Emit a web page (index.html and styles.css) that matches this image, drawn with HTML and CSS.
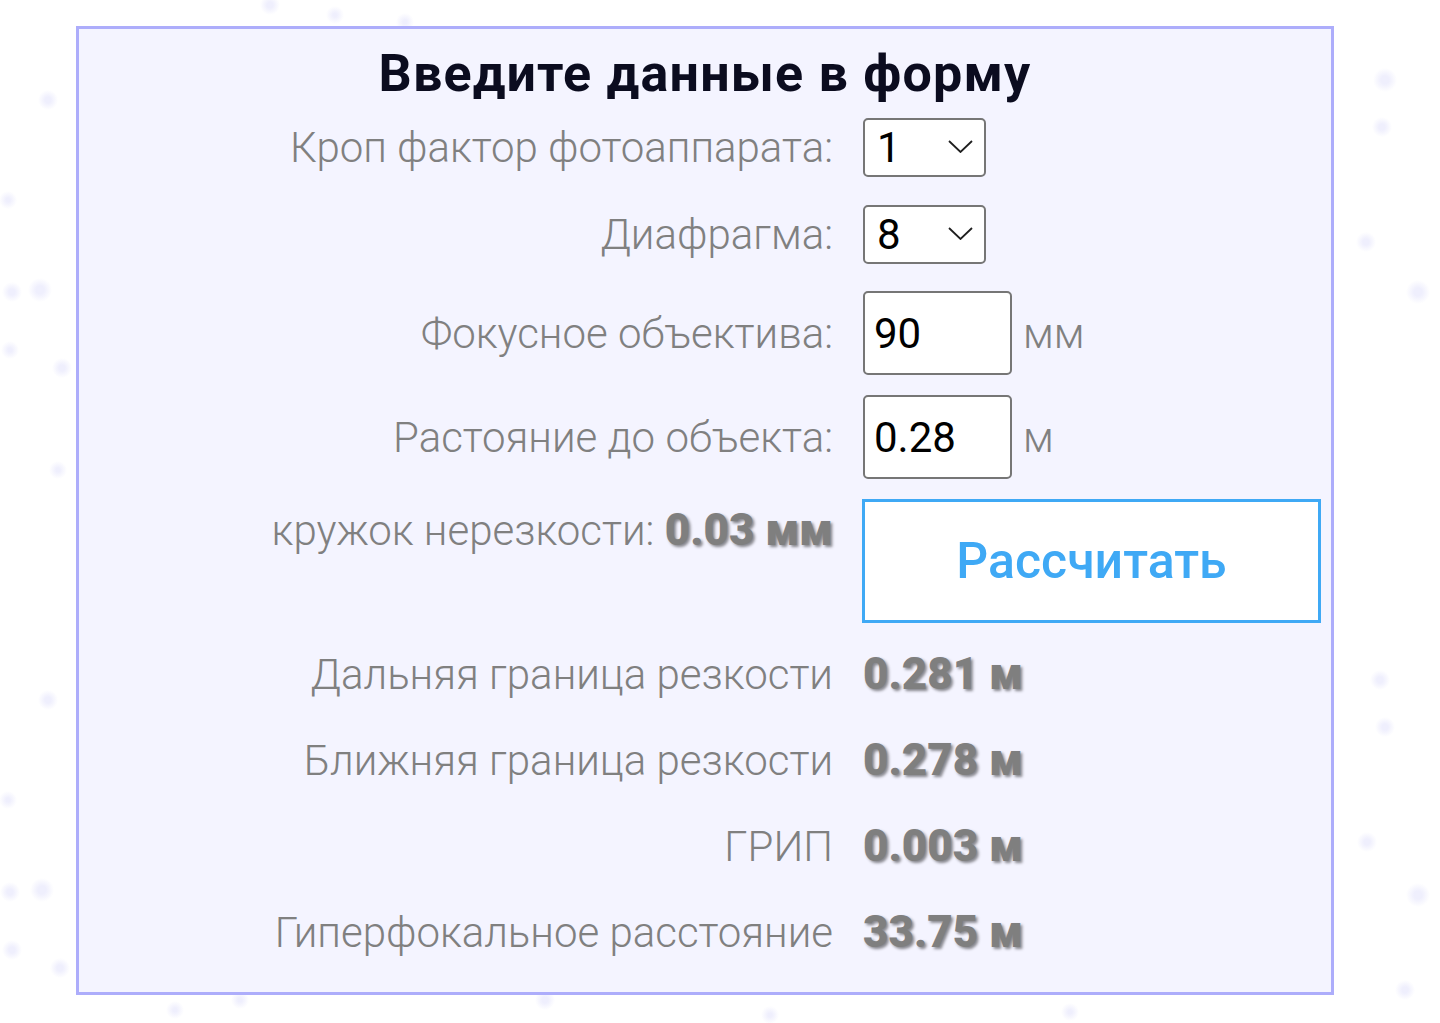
FILE: index.html
```html
<!DOCTYPE html>
<html lang="ru">
<head>
  <meta charset="UTF-8" />
  <meta name="viewport" content="width=device-width, initial-scale=1.0"/>
  <title>Калькулятор ГРИП</title>
  <link rel="stylesheet" href="styles.css">
</head>
<body>

<form class="calc" onsubmit="return false">
  <h1 class="calc-title">Введите данные в форму</h1>

  <div class="row row-first">
    <label class="label" for="crop">Кроп фактор фотоаппарата:</label>
    <div class="select-wrap">
      <select id="crop" class="field field-select">
        <option selected>1</option>
        <option>1.3</option>
        <option>1.5</option>
        <option>1.6</option>
        <option>2</option>
      </select>
      <svg class="chevron" width="25" height="13" viewBox="0 0 25 13"><path d="M1 1 L12.5 12 L24 1" fill="none" stroke="#1f1f1f" stroke-width="1.8"/></svg>
    </div>
  </div>

  <div class="row row-aperture">
    <label class="label" for="aperture">Диафрагма:</label>
    <div class="select-wrap">
      <select id="aperture" class="field field-select">
        <option>1.4</option>
        <option>2</option>
        <option>2.8</option>
        <option>4</option>
        <option>5.6</option>
        <option selected>8</option>
        <option>11</option>
        <option>16</option>
        <option>22</option>
      </select>
      <svg class="chevron" width="25" height="13" viewBox="0 0 25 13"><path d="M1 1 L12.5 12 L24 1" fill="none" stroke="#1f1f1f" stroke-width="1.8"/></svg>
    </div>
  </div>

  <div class="row row-focal">
    <label class="label" for="focal">Фокусное объектива:</label>
    <input id="focal" class="field field-input" type="text" value="90">
    <span class="unit">мм</span>
  </div>

  <div class="row row-distance">
    <label class="label" for="distance">Растояние до объекта:</label>
    <input id="distance" class="field field-input" type="text" value="0.28">
    <span class="unit">м</span>
  </div>

  <div class="row row-action">
    <div class="label label-coc">кружок нерезкости: <b class="value">0.03 мм</b></div>
    <button class="calc-btn" type="submit">Рассчитать</button>
  </div>

  <div class="row result result-first">
    <div class="label">Дальняя граница резкости</div>
    <div class="value">0.281 м</div>
  </div>
  <div class="row result">
    <div class="label">Ближняя граница резкости</div>
    <div class="value">0.278 м</div>
  </div>
  <div class="row result">
    <div class="label">ГРИП</div>
    <div class="value">0.003 м</div>
  </div>
  <div class="row result">
    <div class="label">Гиперфокальное расстояние</div>
    <div class="value">33.75 м</div>
  </div>
</form>

</body>
</html>
```

FILE: styles.css
```css
html, body {
  margin: 0;
  padding: 0;
}

body {
  min-height: 100vh;
  font-family: Roboto, "Noto Sans", sans-serif;
  background-color: #ffffff;
  /* faint blurred notes scattered round the form */
  background-image:
    radial-gradient(circle at 48px 100px, #efeffd 0, #efeffd 3px, rgba(239,239,253,0) 10px),
    radial-gradient(circle at 8px 200px, #efeffd 0, #efeffd 2px, rgba(239,239,253,0) 9px),
    radial-gradient(circle at 12px 292px, #efeffd 0, #efeffd 3px, rgba(239,239,253,0) 10px),
    radial-gradient(circle at 40px 290px, #efeffd 0, #efeffd 4px, rgba(239,239,253,0) 12px),
    radial-gradient(circle at 10px 350px, #efeffd 0, #efeffd 2px, rgba(239,239,253,0) 9px),
    radial-gradient(circle at 62px 368px, #efeffd 0, #efeffd 3px, rgba(239,239,253,0) 10px),
    radial-gradient(circle at 58px 470px, #efeffd 0, #efeffd 2px, rgba(239,239,253,0) 9px),
    radial-gradient(circle at 48px 700px, #efeffd 0, #efeffd 3px, rgba(239,239,253,0) 10px),
    radial-gradient(circle at 8px 800px, #efeffd 0, #efeffd 2px, rgba(239,239,253,0) 9px),
    radial-gradient(circle at 10px 892px, #efeffd 0, #efeffd 3px, rgba(239,239,253,0) 10px),
    radial-gradient(circle at 42px 890px, #efeffd 0, #efeffd 4px, rgba(239,239,253,0) 12px),
    radial-gradient(circle at 12px 950px, #efeffd 0, #efeffd 3px, rgba(239,239,253,0) 10px),
    radial-gradient(circle at 60px 968px, #efeffd 0, #efeffd 3px, rgba(239,239,253,0) 10px),
    radial-gradient(circle at 270px 5px, #efeffd 0, #efeffd 3px, rgba(239,239,253,0) 10px),
    radial-gradient(circle at 335px 15px, #efeffd 0, #efeffd 2px, rgba(239,239,253,0) 9px),
    radial-gradient(circle at 405px 22px, #efeffd 0, #efeffd 2px, rgba(239,239,253,0) 9px),
    radial-gradient(circle at 1385px 80px, #efeffd 0, #efeffd 4px, rgba(239,239,253,0) 12px),
    radial-gradient(circle at 1382px 127px, #efeffd 0, #efeffd 3px, rgba(239,239,253,0) 10px),
    radial-gradient(circle at 1366px 242px, #efeffd 0, #efeffd 3px, rgba(239,239,253,0) 10px),
    radial-gradient(circle at 1418px 292px, #efeffd 0, #efeffd 4px, rgba(239,239,253,0) 12px),
    radial-gradient(circle at 1380px 680px, #efeffd 0, #efeffd 3px, rgba(239,239,253,0) 10px),
    radial-gradient(circle at 1385px 727px, #efeffd 0, #efeffd 3px, rgba(239,239,253,0) 10px),
    radial-gradient(circle at 1367px 842px, #efeffd 0, #efeffd 3px, rgba(239,239,253,0) 10px),
    radial-gradient(circle at 1418px 895px, #efeffd 0, #efeffd 4px, rgba(239,239,253,0) 12px),
    radial-gradient(circle at 1405px 990px, #efeffd 0, #efeffd 3px, rgba(239,239,253,0) 10px),
    radial-gradient(circle at 175px 1010px, #efeffd 0, #efeffd 2px, rgba(239,239,253,0) 9px),
    radial-gradient(circle at 240px 1000px, #efeffd 0, #efeffd 2px, rgba(239,239,253,0) 9px),
    radial-gradient(circle at 545px 1000px, #efeffd 0, #efeffd 3px, rgba(239,239,253,0) 10px),
    radial-gradient(circle at 770px 1015px, #efeffd 0, #efeffd 2px, rgba(239,239,253,0) 9px),
    radial-gradient(circle at 1070px 1012px, #efeffd 0, #efeffd 2px, rgba(239,239,253,0) 9px);
  background-repeat: no-repeat;
}

.calc {
  box-sizing: border-box;
  width: 1258px;
  height: 969px;
  margin: 26px 0 0 76px;
  padding: 17px 0 0;
  border: 3px solid #adadfb;
  background: #f4f4ff;
}

.calc-title {
  margin: 0;
  text-align: center;
  font-size: 52px;
  line-height: 56px;
  letter-spacing: 1.2px;
  font-weight: 700;
  color: #0b0c1f;
}

.row {
  display: flex;
  align-items: baseline;
  gap: 30px;
}

.row-first { margin-top: 16px; }
.row-aperture { margin-top: 28px; }
.row-focal { margin-top: 27px; }
.row-distance { margin-top: 20px; }
.row-action {
  margin-top: 20px;
  align-items: flex-start;
}

.label {
  flex: none;
  width: 754px;
  text-align: right;
  font-size: 42px;
  font-weight: 300;
  color: #808080;
}

.label-coc {
  margin-top: 5px;
}

.value {
  font-size: 44px;
  font-weight: 900;
  color: #7f7f7f;
  text-shadow: 2px 2px 3px rgba(0, 0, 0, 0.45);
}

.result-first { margin-top: 25px; }
.result + .result { margin-top: 34px; }

/* inputs */
.field {
  box-sizing: border-box;
  font-family: Roboto, "Noto Sans", sans-serif;
  font-size: 42px;
  color: #000;
  background: #fff;
  border: 2px solid #767676;
  border-radius: 5px;
  outline: none;
}

.select-wrap {
  position: relative;
  display: inline-block;
}

.field-select {
  -webkit-appearance: none;
  appearance: none;
  width: 123px;
  height: 59px;
  padding: 0 40px 0 12px;
}

.chevron {
  position: absolute;
  right: 13px;
  top: 22px;
  pointer-events: none;
}

.field-input {
  width: 149px;
  height: 84px;
  padding: 0 9px;
}

.unit {
  margin-left: -19px;
  font-size: 42px;
  font-weight: 300;
  color: #808080;
}

.calc-btn {
  box-sizing: border-box;
  width: 459px;
  height: 124px;
  margin-left: -1px;
  border: 3px solid #3fa9f5;
  background: #fff;
  color: #3fa9f5;
  font-family: Roboto, "Noto Sans", sans-serif;
  font-size: 50px;
  font-weight: 500;
  cursor: pointer;
}
```
